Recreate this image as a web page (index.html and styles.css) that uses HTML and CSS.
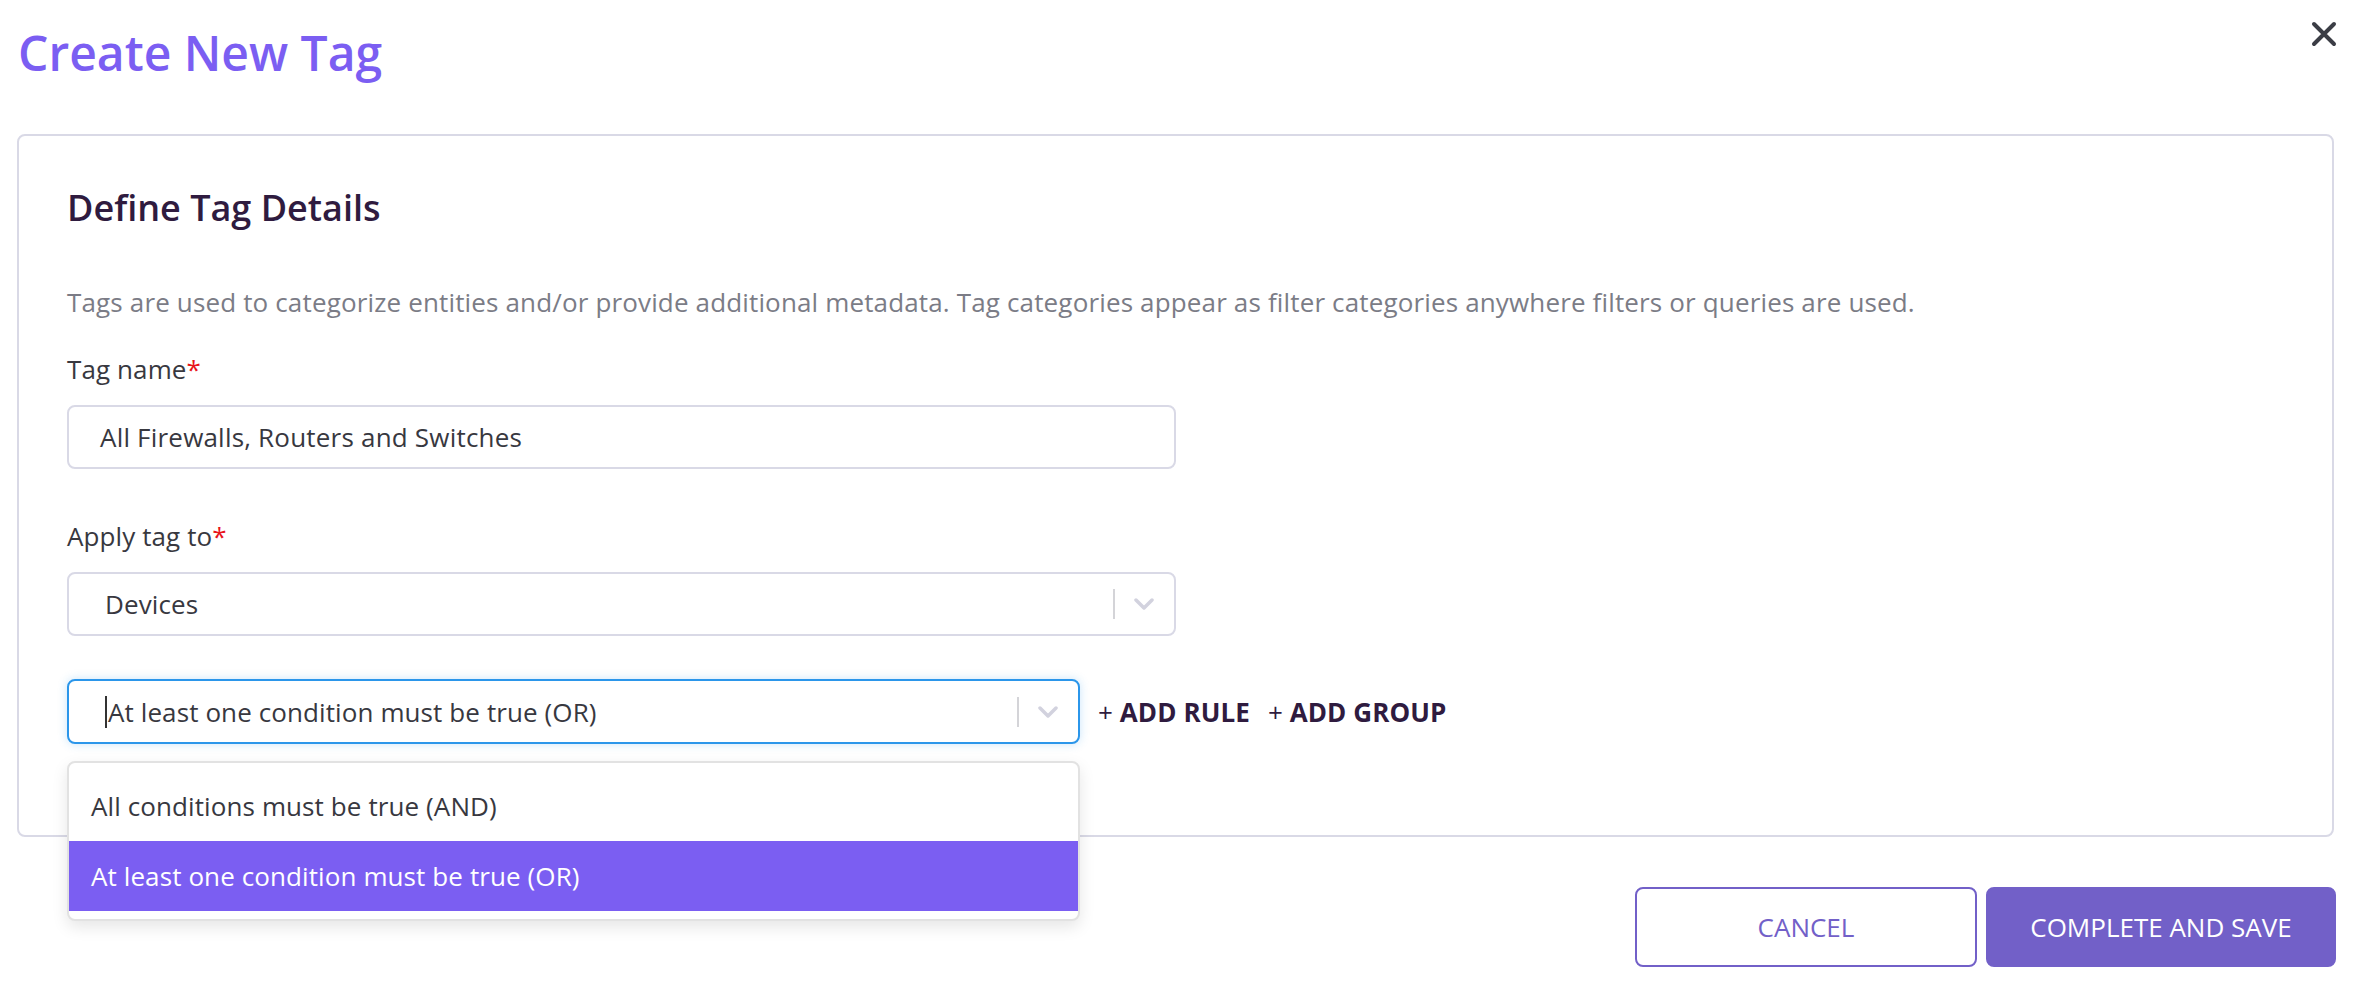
FILE: index.html
```html
<!DOCTYPE html>
<html lang="en">
<head>
    <meta charset="UTF-8">
    <meta name="viewport" content="width=device-width, initial-scale=1.0">
    <title>Create New Tag</title>
    <link rel="stylesheet" href="styles.css">
</head>
<body>
    <div class="modal">
        <header class="modal-header">
            <h1 class="modal-title">Create New Tag</h1>
            <button class="close-btn" aria-label="Close">
                <svg width="26" height="26" viewBox="0 0 26 26">
                    <path d="M3 3 L23 23 M23 3 L3 23" stroke="#3b3d45" stroke-width="4" stroke-linecap="round"/>
                </svg>
            </button>
        </header>

        <section class="card">
            <h2 class="card-title">Define Tag Details</h2>
            <p class="card-desc">Tags are used to categorize entities and/or provide additional metadata. Tag categories appear as filter categories anywhere filters or queries are used.</p>

            <div class="field">
                <label class="field-label">Tag name<span class="req">*</span></label>
                <div class="text-input">All Firewalls, Routers and Switches</div>
            </div>

            <div class="field">
                <label class="field-label">Apply tag to<span class="req">*</span></label>
                <div class="select">
                    <span class="select-value">Devices</span>
                    <span class="select-indicators">
                        <span class="select-sep"></span>
                        <svg class="chevron" width="20" height="12" viewBox="0 0 20 12">
                            <polyline points="2,2 10,10 18,2" fill="none" stroke="#d2d2de" stroke-width="3.5" stroke-linecap="round" stroke-linejoin="round"/>
                        </svg>
                    </span>
                </div>
            </div>

            <div class="rule-row">
                <div class="combinator">
                    <div class="select select-focused">
                        <span class="select-value"><span class="caret"></span>At least one condition must be true (OR)</span>
                        <span class="select-indicators">
                            <span class="select-sep"></span>
                            <svg class="chevron" width="20" height="12" viewBox="0 0 20 12">
                                <polyline points="2,2 10,10 18,2" fill="none" stroke="#d2d2de" stroke-width="3.5" stroke-linecap="round" stroke-linejoin="round"/>
                            </svg>
                        </span>
                    </div>
                    <ul class="menu">
                        <li class="menu-option">All conditions must be true (AND)</li>
                        <li class="menu-option is-selected">At least one condition must be true (OR)</li>
                    </ul>
                </div>
                <button class="link-btn"><span class="plus">+</span> ADD RULE</button>
                <button class="link-btn"><span class="plus">+</span> ADD GROUP</button>
            </div>
        </section>

        <footer class="modal-footer">
            <button class="btn btn-outline">CANCEL</button>
            <button class="btn btn-primary">COMPLETE AND SAVE</button>
        </footer>
    </div>
</body>
</html>
```

FILE: styles.css
```css
:root {
    --purple: #7b5ef2;
    --purple-muted: #7260c8;
    --heading: #2f1b3f;
    --text: #38383f;
    --text-secondary: #7b7c86;
    --border: #d9d9e6;
    --focus: #2b96ea;
}

* {
    box-sizing: border-box;
}

body {
    margin: 0;
    font-family: "Open Sans", "Liberation Sans", sans-serif;
    letter-spacing: 0.1px;
    color: var(--text);
    background: #ffffff;
}

.modal {
    padding: 0 20px 0 17px;
}

/* Header */
.modal-header {
    display: flex;
    justify-content: space-between;
    align-items: flex-start;
    height: 134px;
    padding-top: 20px;
}

.modal-title {
    margin: 0 0 0 1px;
    font-size: 48px;
    font-weight: 600;
    line-height: 65px;
    letter-spacing: 0;
    color: var(--purple);
}

.close-btn {
    border: none;
    background: none;
    padding: 0;
    margin: 1px -3px 0 0;
    width: 26px;
    height: 26px;
    cursor: pointer;
}

.close-btn svg {
    display: block;
}

/* Card */
.card {
    border: 2px solid var(--border);
    border-radius: 8px;
    padding: 48px 48px 91px;
}

.card-title {
    margin: 0;
    font-size: 36px;
    font-weight: 600;
    line-height: 48px;
    letter-spacing: 0;
    color: var(--heading);
}

.card-desc {
    margin: 52px 0 0;
    font-size: 26px;
    line-height: 36px;
    letter-spacing: 0.15px;
    color: var(--text-secondary);
}

.field {
    margin-top: 31px;
}

.field + .field {
    margin-top: 49px;
}

.field-label {
    display: block;
    font-size: 26px;
    line-height: 36px;
    margin-bottom: 18px;
}

.req {
    color: #e8141b;
}

.text-input,
.select {
    display: flex;
    align-items: center;
    width: 1109px;
    height: 64px;
    border: 2px solid var(--border);
    border-radius: 8px;
    font-size: 26px;
    background: #fff;
}

.text-input {
    padding: 0 31px;
    letter-spacing: 0.2px;
}

.select {
    padding-left: 36px;
}

.select-value {
    flex: 1;
    display: flex;
    align-items: center;
}

.select-indicators {
    display: flex;
    align-items: center;
    padding-right: 20px;
}

.select-sep {
    width: 2px;
    height: 30px;
    background: #d4d4d8;
    margin-right: 19px;
}

.chevron {
    display: block;
}

/* Rule row */
.rule-row {
    display: flex;
    align-items: center;
    gap: 18px;
    margin-top: 43px;
}

.combinator {
    position: relative;
    width: 1013px;
}

.select-focused {
    width: 100%;
    height: 65px;
    border-color: var(--focus);
    box-shadow: 0 0 10px rgba(43, 150, 234, 0.25);
}

.caret {
    display: inline-block;
    width: 2px;
    height: 32px;
    background: #333;
    margin-right: 1px;
}

.link-btn {
    border: none;
    background: none;
    padding: 0;
    font-family: inherit;
    font-size: 26px;
    font-weight: 700;
    letter-spacing: 0.1px;
    color: var(--heading);
    cursor: pointer;
}

.plus {
    font-weight: 400;
}

/* Dropdown menu */
.menu {
    position: absolute;
    top: calc(100% + 17px);
    left: 0;
    right: 0;
    margin: 0;
    padding: 8px 0;
    list-style: none;
    background: #fff;
    border: 2px solid #e2e2e2;
    border-radius: 8px;
    box-shadow: 0 6px 16px rgba(0, 0, 0, 0.1);
    z-index: 10;
}

.menu-option {
    display: flex;
    align-items: center;
    height: 70px;
    padding-left: 22px;
    font-size: 26px;
    color: var(--text);
}

.menu-option.is-selected {
    background: var(--purple);
    color: #fff;
}

/* Footer */
.modal-footer {
    display: flex;
    justify-content: flex-end;
    gap: 9px;
    margin: 50px -2px 0 0;
}

.btn {
    height: 80px;
    border-radius: 8px;
    font-family: inherit;
    font-size: 26px;
    letter-spacing: 0;
    cursor: pointer;
}

.btn-outline {
    width: 342px;
    background: #fff;
    border: 2px solid var(--purple-muted);
    color: var(--purple-muted);
}

.btn-primary {
    width: 350px;
    background: var(--purple-muted);
    border: 2px solid var(--purple-muted);
    color: #fff;
}
```
